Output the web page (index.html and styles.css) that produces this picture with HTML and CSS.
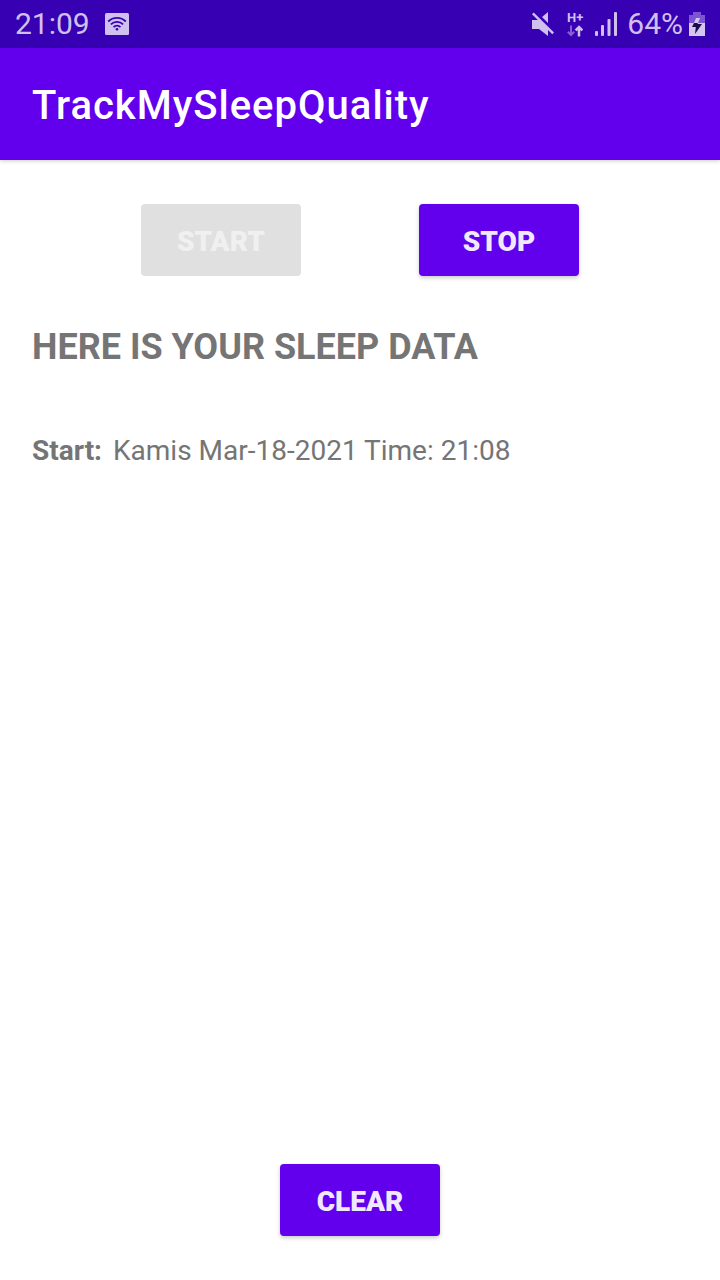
FILE: index.html
```html
<!DOCTYPE html>
<html lang="en">
<head>
<meta charset="utf-8">
<meta name="viewport" content="width=device-width, initial-scale=1">
<title>TrackMySleepQuality</title>
<link rel="stylesheet" href="styles.css">
</head>
<body>
<div class="status">
  <div class="status-group status-left">
    <span class="status-text">21:09</span>
    <svg class="wifi" width="24" height="24" viewBox="0 0 24 24" aria-hidden="true">
      <rect y="1" width="24" height="22" rx="1.500" fill="#cfc0ee"/>
      <g fill="none" stroke="#3700b3" stroke-width="1.800">
        <path d="M3.200 9.500a12.300 12.300 0 0 1 17.600 0"/>
        <path d="M5.900 12.400a8.600 8.600 0 0 1 12.200 0"/>
        <path d="M8.500 15.200a5 5 0 0 1 7 0"/>
      </g>
      <circle cx="12" cy="17.300" r="1.300" fill="#3700b3"/>
    </svg>
  </div>
  <div class="status-group status-right">
    <svg class="mute" width="24" height="26" viewBox="0 0 24 26" aria-hidden="true">
      <g fill="#cfc0ee">
        <path d="M1 9h7l9 9v7l-9-7H1z"/>
        <path d="M11 6l6-5v11z"/>
        <path d="M1 3.200L2.700 1.500 23 21.500 21.300 23.200z"/>
      </g>
    </svg>
    <div class="network">
      <span class="network-type">H+</span>
      <svg width="16" height="12" viewBox="0 0 16 12" aria-hidden="true">
        <path d="M4 .5v9M.8 6.800L4 10l3.200-3.200" fill="none" stroke="#8560d4" stroke-width="2"/>
        <path d="M12 11.500V2M8.600 5.400L12 2l3.400 3.400" fill="none" stroke="#cfc0ee" stroke-width="2.500"/>
      </svg>
    </div>
    <svg class="signal" width="22" height="24" viewBox="0 0 22 24" aria-hidden="true">
      <g fill="#cfc0ee">
        <rect x="0" y="19" width="3" height="5" rx="1"/>
        <rect x="6" y="13" width="3" height="11" rx="1"/>
        <rect x="12.500" y="7" width="3" height="17" rx="1"/>
        <rect x="19" y="0" width="3" height="24" rx="1"/>
      </g>
    </svg>
    <span class="status-text">64%</span>
    <svg class="battery" width="16" height="24" viewBox="0 0 16 24" aria-hidden="true">
      <path d="M4 0h8v3h4v8H0V3h4z" fill="#7d55d2"/>
      <path d="M0 11h16v13H0z" fill="#d3c6ef"/>
      <path d="M7 6h4l-2 5H5z" fill="#d3c6ef"/>
      <path d="M5 11h4l-.5 1H13L6 22l.8-7H3z" fill="#1b0d45"/>
    </svg>
  </div>
</div>
<header class="app-bar"><h1 class="title">TrackMySleepQuality</h1></header>
<main class="content">
  <div class="actions">
    <button class="button" type="button" disabled>START</button>
    <button class="button" type="button">STOP</button>
  </div>
  <section class="log">
    <h2 class="heading">HERE IS YOUR SLEEP DATA</h2>
    <p class="entry"><b>Start:</b><span>Kamis Mar-18-2021 Time: 21:08</span></p>
  </section>
  <div class="footer"><button class="button" type="button">CLEAR</button></div>
</main>
</body>
</html>
```
FILE: styles.css
```css
* { box-sizing: border-box; }

body {
  display: flex;
  flex-direction: column;
  min-height: 100vh;
  margin: 0;
  background: #fff;
  color: #757575;
  font-family: Roboto, "Liberation Sans", sans-serif;
}

.status {
  display: flex;
  justify-content: space-between;
  height: 48px;
  padding: 0 15px;
  background: #3700b3;
  color: #cfc0ee;
}

.status-group { display: flex; align-items: center; }
.status-left { gap: 15px; }
.status-right { gap: 12px; }
.status-text { font-size: 30px; line-height: 50px; }
.status-right .status-text { margin-left: -2px; }

.network {
  display: flex;
  flex-direction: column;
  align-items: center;
  gap: 1px;
}

.network-type {
  font-size: 13px;
  font-weight: 700;
  line-height: 12px;
}

.battery { margin-left: -6px; }

.app-bar {
  padding: 34px 32px 30px;
  background: #6200ee;
  color: #fff;
  box-shadow: 0 1px 4px rgba(0, 0, 0, 0.2);
}

.title {
  margin: 0;
  font-size: 40px;
  font-weight: 500;
  line-height: 48px;
  letter-spacing: 1px;
}

.content {
  display: flex;
  flex: 1;
  flex-direction: column;
  padding: 44px 0;
}

.actions {
  display: flex;
  justify-content: space-evenly;
  padding: 0 23px;
}

.button {
  width: 160px;
  height: 72px;
  padding: 2px 0 0;
  border: 0;
  border-radius: 4px;
  background: #6200ee;
  color: #f1e8fd;
  box-shadow: 0 2px 4px rgba(0, 0, 0, 0.2);
  font-family: inherit;
  font-size: 28px;
  font-weight: 900;
}

.button:disabled {
  background: #e0e0e0;
  color: #f0f0f0;
  box-shadow: none;
}

.log { flex: 1; padding: 49px 32px; }

.heading {
  margin: 0;
  font-size: 36px;
  font-weight: 700;
  line-height: 44px;
}

.entry {
  display: flex;
  gap: 11px;
  margin: 64px 0 0;
  font-size: 28px;
  line-height: 36px;
}

.footer { display: flex; justify-content: center; }
```
